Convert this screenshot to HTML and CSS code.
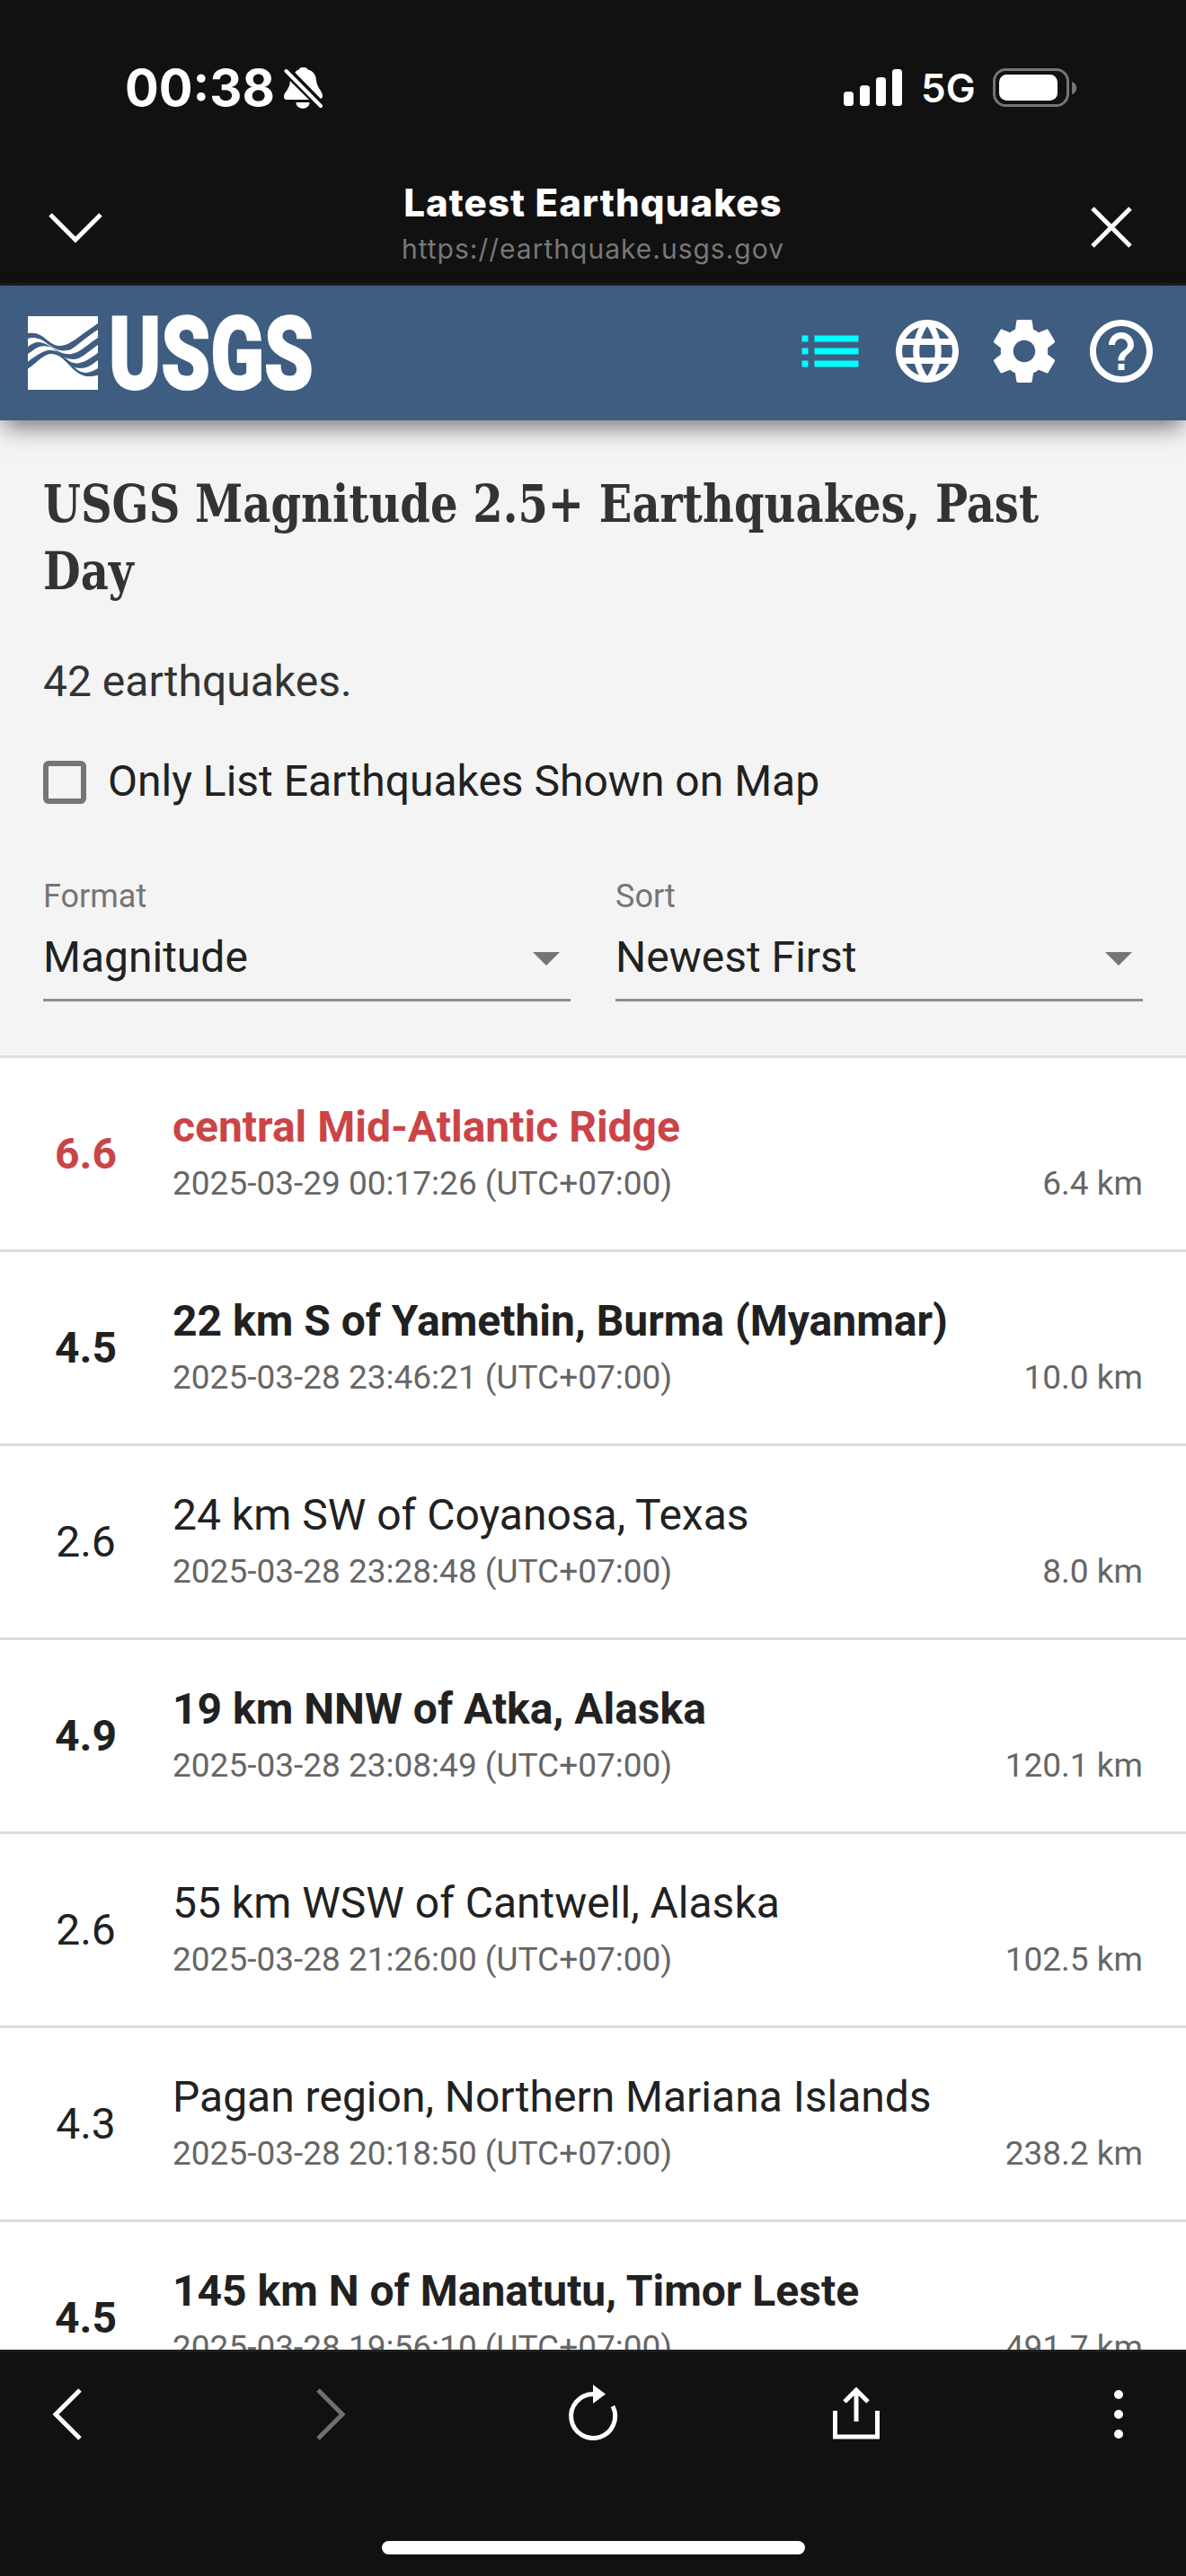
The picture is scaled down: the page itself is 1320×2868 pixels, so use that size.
FILE: index.html
```
<!DOCTYPE html>
<html lang="en">
<head>
    <meta charset="UTF-8">
    <meta name="viewport" content="width=device-width, initial-scale=1.0">
    <title>Latest Earthquakes</title>
    <link rel="stylesheet" href="styles.css">
</head>
<body>
    <div class="screen">
        <div class="status-bar">
            <div class="status-left">
                <span class="time">00:38</span>
                <svg class="bell" viewBox="0 0 44 46" width="44" height="46">
                    <path d="M6.700 15C7 25 0 27 0 32.500C0 35 1 36 3 36H28zM12.300 5.700Q14 3 16.700 2.500C18-1 25-1 26.700 2.500C33 4 35.500 9 36 14C36.500 23 43 26 43 32Q43 34 41 35z"/>
                    <path d="M13.500 39h15c0 9-15 9-15 0z"/>
                    <path class="slash" d="M2.500 4L41 43"/>
                </svg>
            </div>
            <div class="status-right">
                <svg class="signal" viewBox="0 0 66 42" width="66" height="42">
                    <rect x="0" y="25" width="11" height="16" rx="3.5"/>
                    <rect x="18" y="18" width="11" height="23" rx="3.5"/>
                    <rect x="36" y="9" width="11" height="32" rx="3.5"/>
                    <rect x="54" y="0" width="11" height="41" rx="3.5"/>
                </svg>
                <span class="network">5G</span>
                <svg class="battery" viewBox="0 0 94 44" width="94" height="44">
                    <rect class="battery-case" x="1.5" y="1.5" width="82" height="40" rx="13"/>
                    <rect x="7" y="7" width="65" height="29" rx="8.5"/>
                    <path class="battery-cap" d="M88 15c7 2 7 12 0 14z"/>
                </svg>
            </div>
        </div>

        <div class="browser-top">
            <svg class="line-icon" viewBox="0 0 64 48" width="64" height="48"><path d="M4 9l28 28L60 9"/></svg>
            <div class="page-info">
                <div class="page-title">Latest Earthquakes</div>
                <div class="page-url">https://earthquake.usgs.gov</div>
            </div>
            <svg class="line-icon" viewBox="0 0 48 48" width="48" height="48"><path d="M3 2l42 42M45 2L3 44"/></svg>
        </div>

        <header class="app-header">
            <svg class="logo" viewBox="0 0 320 86" width="320" height="86">
                <rect class="logo-box" x="0" y="2" width="78" height="82"/>
                <g class="logo-waves">
                    <path d="M0 21C18 18 22 35 36 35C48 34 54 26 78 10V17C64 26 56 34 48 39C36 43 30 38 22 33C14 26 6 25 0 27z"/>
                    <path d="M0 36C8 30 12 30 20 33C30 38 38 46 49 44C58 42 62 37 78 26V34C66 42 60 50 50 50C38 50 34 40 24 36C12 33 8 39 0 44z"/>
                    <path d="M0 52.700C8 47 14 42 22 40C38 38 42 56 56 54.500C64 53 68 50 78 43V51C70 57 66 60 58 60C44 60 40 44 26 44C18 44 12 52 0 60.700z"/>
                    <path d="M30 41C46 48 52 66 66 65Q72 64 78 60V67.700C54 74 50 57 30 41z"/>
                </g>
                <text class="logo-text" x="90" y="83" textLength="228" lengthAdjust="spacingAndGlyphs">USGS</text>
            </svg>
            <nav class="header-nav">
                <svg class="nav-icon active" viewBox="0 0 24 24"><path d="M3 13h2v-2H3v2zm0 4h2v-2H3v2zm0-8h2V7H3v2zm4 4h14v-2H7v2zm0 4h14v-2H7v2zM7 7v2h14V7H7z"/></svg>
                <svg class="nav-icon" viewBox="0 0 24 24"><path d="M11.99 2C6.470 2 2 6.480 2 12s4.470 10 9.990 10C17.520 22 22 17.520 22 12S17.520 2 11.990 2zm6.930 6h-2.950c-.32-1.250-.78-2.450-1.380-3.560 1.840.63 3.370 1.910 4.330 3.560zM12 4.040c.83 1.200 1.480 2.530 1.910 3.960h-3.820c.43-1.430 1.080-2.760 1.910-3.960zM4.260 14C4.100 13.360 4 12.690 4 12s.1-1.360.26-2h3.380c-.08.66-.14 1.320-.14 2 0 .68.06 1.340.14 2H4.260zm.82 2h2.950c.32 1.250.78 2.450 1.380 3.560-1.840-.63-3.370-1.900-4.330-3.560zm2.950-8H5.080c.96-1.660 2.490-2.930 4.330-3.560C8.810 5.550 8.350 6.750 8.030 8zM12 19.960c-.83-1.200-1.480-2.530-1.910-3.960h3.820c-.43 1.430-1.080 2.760-1.910 3.960zM14.340 14H9.660c-.09-.66-.16-1.320-.16-2 0-.68.07-1.350.16-2h4.680c.09.65.16 1.320.16 2 0 .68-.07 1.340-.16 2zm.25 5.560c.6-1.110 1.060-2.310 1.380-3.560h2.950c-.96 1.650-2.490 2.930-4.330 3.560zM16.360 14c.08-.66.14-1.320.14-2 0-.68-.06-1.340-.14-2h3.380c.16.64.26 1.310.26 2s-.1 1.360-.26 2h-3.380z"/></svg>
                <svg class="nav-icon" viewBox="0 0 24 24"><path d="M19.430 12.980c.04-.32.07-.64.07-.98s-.03-.66-.07-.98l2.110-1.650c.19-.15.24-.42.12-.64l-2-3.460c-.12-.22-.39-.3-.61-.22l-2.490 1c-.52-.4-1.080-.73-1.690-.98l-.38-2.650C14.460 2.180 14.250 2 14 2h-4c-.25 0-.46.18-.49.42l-.38 2.650c-.61.25-1.170.59-1.690.98l-2.490-1c-.23-.09-.49 0-.61.22l-2 3.460c-.13.22-.07.49.12.64l2.110 1.650c-.04.32-.07.65-.07.98s.03.66.07.98l-2.110 1.650c-.19.15-.24.42-.12.64l2 3.460c.12.22.39.3.61.22l2.490-1c.52.4 1.080.73 1.690.98l.38 2.650c.03.24.24.42.49.42h4c.25 0 .46-.18.49-.42l.38-2.650c.61-.25 1.170-.59 1.690-.98l2.490 1c.23.09.49 0 .61-.22l2-3.460c.12-.22.07-.49-.12-.64l-2.110-1.650zM12 15.500c-1.930 0-3.500-1.570-3.500-3.500s1.570-3.500 3.500-3.500 3.500 1.570 3.500 3.500-1.570 3.500-3.500 3.500z"/></svg>
                <svg class="nav-icon" viewBox="0 0 24 24"><path d="M11 18h2v-2h-2v2zm1-16C6.480 2 2 6.480 2 12s4.480 10 10 10 10-4.480 10-10S17.520 2 12 2zm0 18c-4.410 0-8-3.590-8-8s3.590-8 8-8 8 3.590 8 8-3.590 8-8 8zm0-14c-2.210 0-4 1.790-4 4h2c0-1.100.9-2 2-2s2 .9 2 2c0 2-3 1.750-3 5h2c0-2.250 3-2.500 3-5 0-2.210-1.790-4-4-4z"/></svg>
            </nav>
        </header>

        <main class="content">
            <section class="list-header">
                <h1>USGS Magnitude 2.5+ Earthquakes, Past<br>Day</h1>
                <p class="count">42 earthquakes.</p>
                <label class="map-filter">
                    <span class="checkbox"></span>
                    <span class="filter-text">Only List Earthquakes Shown on Map</span>
                </label>
                <div class="selects">
                    <div class="select">
                        <div class="select-label">Format</div>
                        <div class="select-value">Magnitude<span class="arrow"></span></div>
                    </div>
                    <div class="select">
                        <div class="select-label">Sort</div>
                        <div class="select-value">Newest First<span class="arrow"></span></div>
                    </div>
                </div>
            </section>

            <ul class="quakes">
                <li class="quake big">
                    <span class="mag">6.6</span>
                    <div class="info">
                        <div class="place">central Mid-Atlantic Ridge</div>
                        <div class="details"><span>2025-03-29 00:17:26 (UTC+07:00)</span><span>6.4 km</span></div>
                    </div>
                </li>
                <li class="quake bold">
                    <span class="mag">4.5</span>
                    <div class="info">
                        <div class="place">22 km S of Yamethin, Burma (Myanmar)</div>
                        <div class="details"><span>2025-03-28 23:46:21 (UTC+07:00)</span><span>10.0 km</span></div>
                    </div>
                </li>
                <li class="quake">
                    <span class="mag">2.6</span>
                    <div class="info">
                        <div class="place">24 km SW of Coyanosa, Texas</div>
                        <div class="details"><span>2025-03-28 23:28:48 (UTC+07:00)</span><span>8.0 km</span></div>
                    </div>
                </li>
                <li class="quake bold">
                    <span class="mag">4.9</span>
                    <div class="info">
                        <div class="place">19 km NNW of Atka, Alaska</div>
                        <div class="details"><span>2025-03-28 23:08:49 (UTC+07:00)</span><span>120.1 km</span></div>
                    </div>
                </li>
                <li class="quake">
                    <span class="mag">2.6</span>
                    <div class="info">
                        <div class="place">55 km WSW of Cantwell, Alaska</div>
                        <div class="details"><span>2025-03-28 21:26:00 (UTC+07:00)</span><span>102.5 km</span></div>
                    </div>
                </li>
                <li class="quake">
                    <span class="mag">4.3</span>
                    <div class="info">
                        <div class="place">Pagan region, Northern Mariana Islands</div>
                        <div class="details"><span>2025-03-28 20:18:50 (UTC+07:00)</span><span>238.2 km</span></div>
                    </div>
                </li>
                <li class="quake bold">
                    <span class="mag">4.5</span>
                    <div class="info">
                        <div class="place">145 km N of Manatutu, Timor Leste</div>
                        <div class="details"><span>2025-03-28 19:56:10 (UTC+07:00)</span><span>491.7 km</span></div>
                    </div>
                </li>
            </ul>
        </main>

        <footer class="browser-bottom">
            <div class="toolbar">
                <svg class="line-icon" viewBox="0 0 66 66" width="66" height="66"><path d="M47 6L20 33l27 27"/></svg>
                <svg class="line-icon disabled" viewBox="0 0 66 66" width="66" height="66"><path d="M19 6l27 27-27 27"/></svg>
                <svg class="line-icon" viewBox="0 0 66 66" width="66" height="66">
                    <path d="M33 10.500A24.500 24.500 0 1 0 55 24"/>
                    <path class="solid" d="M33 0l14 10.500L33 21z"/>
                </svg>
                <svg class="line-icon" viewBox="0 0 66 66" width="66" height="66"><path d="M9.500 29v29h47V29M33 41V7M20 19L33 6l13 13"/></svg>
                <svg class="dots" viewBox="0 0 66 66" width="66" height="66">
                    <circle cx="33" cy="11" r="5"/>
                    <circle cx="33" cy="33" r="5"/>
                    <circle cx="33" cy="55" r="5"/>
                </svg>
            </div>
            <div class="home-indicator"></div>
        </footer>
    </div>
</body>
</html>
```
FILE: styles.css
```
* {
    margin: 0;
    padding: 0;
    box-sizing: border-box;
}

body {
    background: #111;
    font-family: Roboto, sans-serif;
}

svg {
    display: block;
    flex-shrink: 0;
}

.screen {
    width: 1320px;
    height: 2868px;
    display: flex;
    flex-direction: column;
    overflow: hidden;
}

/* Phone status bar */
.status-bar {
    height: 192px;
    padding: 3px 121px 0 139px;
    display: flex;
    justify-content: space-between;
    align-items: center;
    font-family: Inter, sans-serif;
    color: #fff;
    fill: #fff;
}

.status-left,
.status-right {
    display: flex;
    align-items: center;
}

.time {
    width: 177px;
    font-size: 56px;
    font-weight: 700;
}

.slash {
    stroke: #fff;
    stroke-width: 4;
    stroke-linecap: round;
}

.network {
    width: 80px;
    margin-left: 20px;
    font-size: 44px;
    font-weight: 600;
}

.battery-case {
    fill: none;
    stroke: #757575;
    stroke-width: 3;
}

.battery-cap {
    fill: #757575;
}

/* Browser title bar */
.browser-top {
    height: 126px;
    padding: 0 59px 0 52px;
    display: flex;
    align-items: center;
    border-bottom: 3px solid #1e1e1e;
    font-family: Inter, sans-serif;
    text-align: center;
}

.page-info {
    flex: 1;
    align-self: flex-start;
    margin-right: 9px;
    padding-top: 6px;
}

.line-icon {
    fill: none;
    stroke: #fff;
    stroke-width: 5;
}

.line-icon .solid {
    fill: #fff;
    stroke: none;
}

.line-icon.disabled {
    stroke: #707070;
}

.page-title {
    color: #fff;
    font-size: 42px;
    font-weight: 800;
    line-height: 56px;
    letter-spacing: 1.1px;
}

.page-url {
    margin-top: 3px;
    color: #787878;
    font-size: 30px;
    line-height: 40px;
    letter-spacing: 1px;
}

/* USGS header */
.app-header {
    position: relative;
    height: 150px;
    padding: 0 30px 0 31px;
    display: flex;
    justify-content: space-between;
    align-items: center;
    background: #3e5d80;
    box-shadow: 0 12px 24px -4px rgba(0, 0, 0, 0.5);
}

.logo-box {
    fill: #fff;
}

.logo-waves {
    fill: #3e5d80;
}

.logo-text {
    fill: #fff;
    stroke: #fff;
    stroke-width: 2;
    font-family: Roboto, sans-serif;
    font-size: 113px;
    font-weight: 900;
}

.header-nav {
    display: flex;
    gap: 24px;
    margin-bottom: 4px;
}

.nav-icon {
    width: 84px;
    height: 84px;
    fill: #fff;
}

.nav-icon.active {
    fill: #0ff;
}

/* Page content */
.content {
    height: 2148px;
    overflow: hidden;
    background: #fff;
}

.list-header {
    height: 710px;
    padding: 55px 48px 0;
    background: #f4f4f4;
    border-bottom: 3px solid #ddd;
}

h1 {
    color: #333;
    font-family: "DejaVu Serif Condensed", "DejaVu Serif", serif;
    font-size: 57px;
    font-stretch: condensed;
    font-weight: 700;
    line-height: 75px;
    white-space: nowrap;
    transform: scaleX(0.937);
    transform-origin: left;
}

.count {
    margin-top: 50px;
    color: #333;
    font-size: 48px;
    line-height: 72px;
}

.map-filter {
    display: flex;
    align-items: center;
    gap: 24px;
    margin-top: 40px;
    height: 72px;
    color: #212121;
    font-size: 48px;
}

.filter-text {
    padding-bottom: 3px;
}

.checkbox {
    width: 48px;
    height: 48px;
    border: 6px solid #757575;
    border-radius: 6px;
}

.selects {
    display: flex;
    gap: 50px;
    margin-top: 70px;
}

.select {
    flex: 1;
    border-bottom: 3px solid #8e8e8e;
}

.select-label {
    color: #757575;
    font-size: 36px;
    line-height: 42px;
}

.select-value {
    display: flex;
    justify-content: space-between;
    align-items: center;
    height: 93px;
    padding-right: 12px;
    color: #212121;
    font-size: 48px;
}

.arrow {
    margin-top: 3px;
    border: 15px solid transparent;
    border-top-color: #757575;
    border-bottom: 0;
}

.quakes {
    list-style: none;
}

.quake {
    display: flex;
    align-items: center;
    height: 216px;
    padding: 0 48px;
    border-bottom: 3px solid #ddd;
    color: #212121;
    font-size: 48px;
}

.quake.bold,
.quake.big {
    font-weight: 700;
}

.quake.big {
    color: #cb4447;
}

.mag {
    width: 95px;
    margin-right: 49px;
    text-align: center;
}

.info {
    flex: 1;
    padding-bottom: 5px;
}

.place {
    line-height: 72px;
}

.details {
    display: flex;
    justify-content: space-between;
    color: #666;
    font-size: 37px;
    font-weight: 400;
    line-height: 54px;
}

/* Browser toolbar */
.browser-bottom {
    flex: 1;
    padding-top: 36px;
    border-top: 3px solid #1e1e1e;
    background: #111;
}

.toolbar {
    display: flex;
    justify-content: space-between;
    padding: 0 42px;
}

.dots {
    fill: #fff;
}

.home-indicator {
    width: 471px;
    height: 15px;
    margin: 108px auto 0;
    border-radius: 8px;
    background: #fff;
}
```
